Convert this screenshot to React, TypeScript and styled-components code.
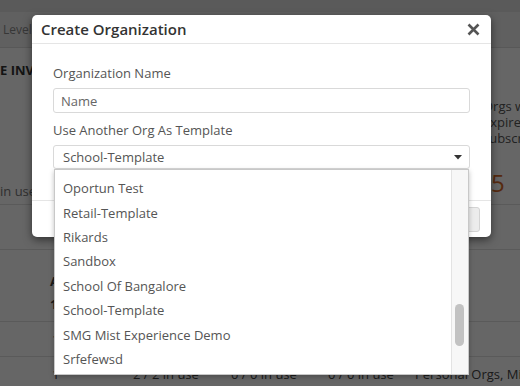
import styled, { createGlobalStyle } from "styled-components";

const GlobalStyle = createGlobalStyle`
  html, body {
    margin: 0;
    padding: 0;
    background: #ffffff;
    font-family: "Open Sans", "Liberation Sans", sans-serif;
    color: #333;
    overflow: hidden;
  }
  * { box-sizing: border-box; }
`;

const orgs = [
  "Oportun Test",
  "Retail-Template",
  "Rikards",
  "Sandbox",
  "School Of Bangalore",
  "School-Template",
  "SMG Mist Experience Demo",
  "Srfefewsd",
];

// page behind the backdrop
const Page = styled.div`
  position: relative;
  width: 520px;
  height: 386px;
  overflow: hidden;
`;

const TopStrip = styled.div`
  height: 12px;
  background: #e2e2e2;
`;

const TabRow = styled.div`
  height: 36px;
  display: flex;
  align-items: center;
  padding-left: 3px;
  background: #f0f0f0;
  border-bottom: 1px solid #dcdcdc;
  font-size: 12px;
  color: #8a8a8a;
`;

const Summary = styled.div`
  height: 157px;
  display: flex;
  justify-content: space-between;
  border-bottom: 1px solid #e2e2e2;
`;

const SummaryLeft = styled.div`
  display: flex;
  flex-direction: column;
  justify-content: space-between;
  padding: 13px 0 4px 0;
`;

const SectionTitle = styled.div`
  font-size: 13px;
  font-weight: 700;
  color: #333;
`;

const InUse = styled.div`
  font-size: 13px;
  color: #777;
`;

const SummaryRight = styled.div`
  width: 37px;
  padding-top: 50px;
  font-size: 13px;
  line-height: 16px;
  color: #555;
  white-space: nowrap;
`;

const BigCount = styled.div`
  margin-top: 22px;
  padding-left: 8px;
  font-size: 24px;
  line-height: 30px;
  color: #d8692a;
`;

const Spacer = styled.div`
  height: 45px;
  border-bottom: 1px solid #e2e2e2;
`;

const TableRow = styled.div<{ $h: number }>`
  height: ${(p) => p.$h}px;
  display: grid;
  grid-template-columns: 133px 98px 97px 87px 1fr;
  align-items: center;
  border-bottom: 1px solid #e2e2e2;
  font-size: 13px;
  color: #444;
  white-space: nowrap;
`;

const FirstCell = styled.div`
  padding-left: 52px;
`;

const HeadCell = styled.div`
  padding: 14px 0 0 50px;
  font-weight: 700;
  line-height: 23px;
`;

const Backdrop = styled.div`
  position: absolute;
  inset: 0;
  background: rgba(0, 0, 0, 0.6);
`;

// modal
const Modal = styled.div`
  position: absolute;
  left: 32px;
  top: 15px;
  width: 459px;
  background: #fff;
  border-radius: 5px;
  box-shadow: 0 3px 9px rgba(0, 0, 0, 0.5);
  display: flex;
  flex-direction: column;
`;

const Header = styled.div`
  height: 29px;
  display: flex;
  align-items: center;
  justify-content: space-between;
  padding: 0 11px 0 9px;
  border-bottom: 1px solid #e5e5e5;
`;

const Title = styled.div`
  font-size: 15px;
  font-weight: 600;
  color: #333;
`;

const Close = styled.div`
  display: flex;
  align-items: center;
  justify-content: center;
  width: 14px;
  height: 14px;
`;

const Body = styled.div`
  padding: 21px 21px 31px 21px;
  display: flex;
  flex-direction: column;
`;

const Field = styled.div`
  display: flex;
  flex-direction: column;
  & + & {
    margin-top: 9px;
  }
`;

const Label = styled.div`
  font-size: 13px;
  line-height: 17px;
  color: #555;
  margin-bottom: 6px;
`;

const Input = styled.div`
  height: 25px;
  border: 1px solid #d9d9d9;
  border-radius: 3px;
  padding-left: 7px;
  display: flex;
  align-items: center;
  font-size: 13px;
  color: #666;
`;

const SelectWrap = styled.div`
  position: relative;
`;

const Select = styled.div`
  height: 24px;
  border: 1px solid #d9d9d9;
  border-radius: 3px;
  padding: 0 7px 0 9px;
  display: flex;
  align-items: center;
  justify-content: space-between;
  font-size: 13px;
  color: #555;
`;

const Menu = styled.div`
  position: absolute;
  left: 1px;
  top: 24px;
  width: 415px;
  height: 206px;
  display: flex;
  background: #fff;
  border: 1px solid #c8c8c8;
  box-shadow: 0 2px 5px rgba(0, 0, 0, 0.25);
  z-index: 2;
`;

const List = styled.div`
  flex: 1;
  overflow: hidden;
  padding-top: 6px;
`;

const Item = styled.div`
  height: 24.4px;
  display: flex;
  align-items: center;
  padding-left: 8px;
  font-size: 13px;
  color: #555;
  white-space: nowrap;
`;

const Track = styled.div<{ $offset: number }>`
  width: 17px;
  background: #f7f7f7;
  border-left: 1px solid #e3e3e3;
  padding: ${(p) => p.$offset}px 0 0 3px;
`;

const Thumb = styled.div`
  width: 9px;
  height: 42px;
  border-radius: 5px;
  background: #c2c2c2;
`;

const Footer = styled.div`
  height: 37px;
  border-top: 1px solid #e5e5e5;
  display: flex;
  justify-content: flex-end;
  align-items: center;
  padding: 0 11px;
`;

const Button = styled.div`
  height: 25px;
  padding: 0 14px;
  border: 1px solid #d4d4d4;
  border-radius: 3px;
  background: #ececec;
  display: flex;
  align-items: center;
  font-size: 13px;
  color: #999;
`;

export default function App() {
  return (
    <>
      <GlobalStyle />
      <Page>
        <TopStrip />
        <TabRow>Levels</TabRow>
        <Summary>
          <SummaryLeft>
            <SectionTitle>E INVENTORY</SectionTitle>
            <InUse>in use</InUse>
          </SummaryLeft>
          <SummaryRight>
            Orgs with
            <br />
            expired
            <br />
            subscriptions
            <BigCount>5</BigCount>
          </SummaryRight>
        </Summary>
        <Spacer />
        <TableRow $h={72}>
          <HeadCell>
            A<br />1
          </HeadCell>
        </TableRow>
        <TableRow $h={35}>
          <FirstCell>1</FirstCell>
        </TableRow>
        <TableRow $h={35}>
          <FirstCell>1</FirstCell>
          <div>2 / 2 in use</div>
          <div>0 / 0 in use</div>
          <div>0 / 0 in use</div>
          <div>Personal Orgs, Mist</div>
        </TableRow>

        <Backdrop />

        <Modal>
          <Header>
            <Title>Create Organization</Title>
            <Close>
              <svg width="13" height="13" viewBox="0 0 13 13">
                <path
                  d="M1.5 1.5 L11.5 11.5 M11.5 1.5 L1.5 11.5"
                  stroke="#555"
                  strokeWidth="2.6"
                />
              </svg>
            </Close>
          </Header>
          <Body>
            <Field>
              <Label>Organization Name</Label>
              <Input>Name</Input>
            </Field>
            <Field>
              <Label>Use Another Org As Template</Label>
              <SelectWrap>
                <Select>
                  School-Template
                  <svg width="8" height="5" viewBox="0 0 8 5">
                    <polygon points="0,0 8,0 4,4.5" fill="#333" />
                  </svg>
                </Select>
                <Menu>
                  <List>
                    {orgs.map((o) => (
                      <Item key={o}>{o}</Item>
                    ))}
                  </List>
                  <Track $offset={134}>
                    <Thumb />
                  </Track>
                </Menu>
              </SelectWrap>
            </Field>
          </Body>
          <Footer>
            <Button>Create</Button>
          </Footer>
        </Modal>
      </Page>
    </>
  );
}
